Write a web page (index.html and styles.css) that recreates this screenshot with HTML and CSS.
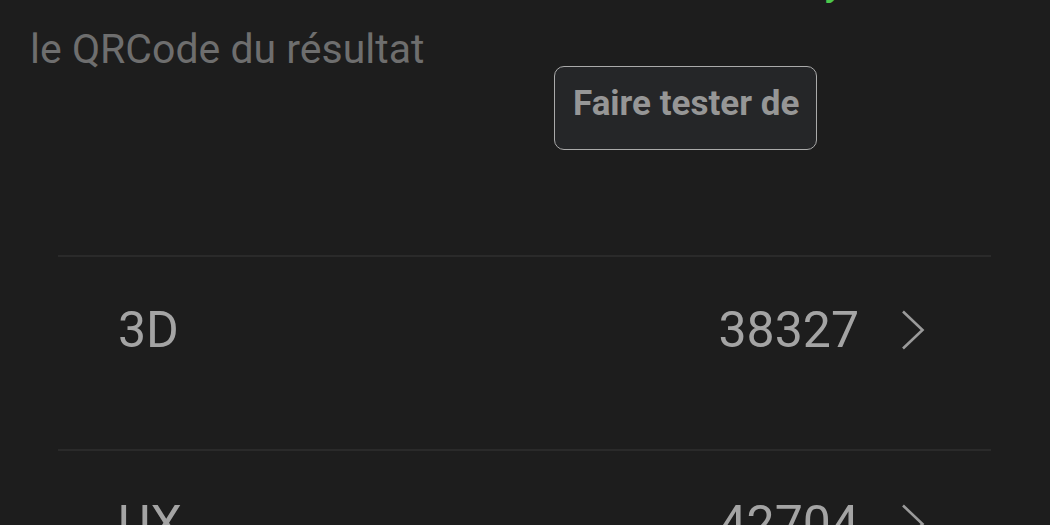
FILE: index.html
```html
<!DOCTYPE html>
<html lang="fr">
<head>
<meta charset="utf-8">
<link rel="stylesheet" href="styles.css">
</head>
<body>
<div class="screen">
  <div class="verify-line"><span class="verify-text">Analyse</span></div>
  <p class="qr-text">le QRCode du résultat</p>
  <div class="btn-row">
    <div class="retest-btn"><span>Faire tester de nouveau</span></div>
  </div>
  <ul class="scores">
    <li class="score-row">
      <span class="score-label">3D</span>
      <span class="score-value">38327</span>
      <svg class="chev" width="24" height="40" viewBox="0 0 24 40"><path d="M2 1.5 L21.5 20 L2 38.5" fill="none" stroke="#9a9a9a" stroke-width="2.6"/></svg>
    </li>
    <li class="score-row">
      <span class="score-label">UX</span>
      <span class="score-value">42704</span>
      <svg class="chev" width="24" height="40" viewBox="0 0 24 40"><path d="M2 1.5 L21.5 20 L2 38.5" fill="none" stroke="#9a9a9a" stroke-width="2.6"/></svg>
    </li>
  </ul>
</div>
</body>
</html>
```
FILE: styles.css
```css
html, body {
  margin: 0;
  padding: 0;
  background: #1d1d1d;
}
body {
  width: 1050px;
  height: 525px;
  overflow: hidden;
  font-family: Roboto, "Liberation Sans", sans-serif;
}
.screen {
  display: flex;
  flex-direction: column;
}
.verify-line {
  height: 0;
  position: relative;
}
.verify-text {
  position: absolute;
  left: 744px;
  top: -38px;
  font-size: 40px;
  line-height: 40px;
  font-weight: 500;
  color: #4cc94c;
  white-space: nowrap;
}
.qr-text {
  margin: 27px 0 0 30px;
  font-size: 41px;
  line-height: 44px;
  color: #6e6e6e;
}
.btn-row {
  display: flex;
  padding-left: 554px;
  margin-top: -5px;
}
.retest-btn {
  box-sizing: border-box;
  width: 263px;
  height: 84px;
  border: 1.5px solid #aaaaaa;
  border-radius: 10px;
  background: #252628;
  padding: 16px 10px 0 18px;
  overflow: hidden;
}
.retest-btn span {
  display: block;
  height: 42px;
  overflow: hidden;
  font-size: 35px;
  line-height: 42px;
  font-weight: 700;
  color: #969696;
}
.scores {
  list-style: none;
  margin: 105px 59px 0 58px;
  padding: 0;
}
.score-row {
  box-sizing: border-box;
  display: flex;
  align-items: flex-start;
  border-top: 2px solid #2a2a2a;
  height: 194px;
  padding: 44px 66px 0 60px;
}
.score-label {
  flex: 1;
  font-size: 50px;
  line-height: 58px;
  color: #a4a4a4;
}
.score-value {
  font-size: 50px;
  line-height: 58px;
  color: #a4a4a4;
}
.chev {
  margin: 9px 0 0 42px;
}
```
